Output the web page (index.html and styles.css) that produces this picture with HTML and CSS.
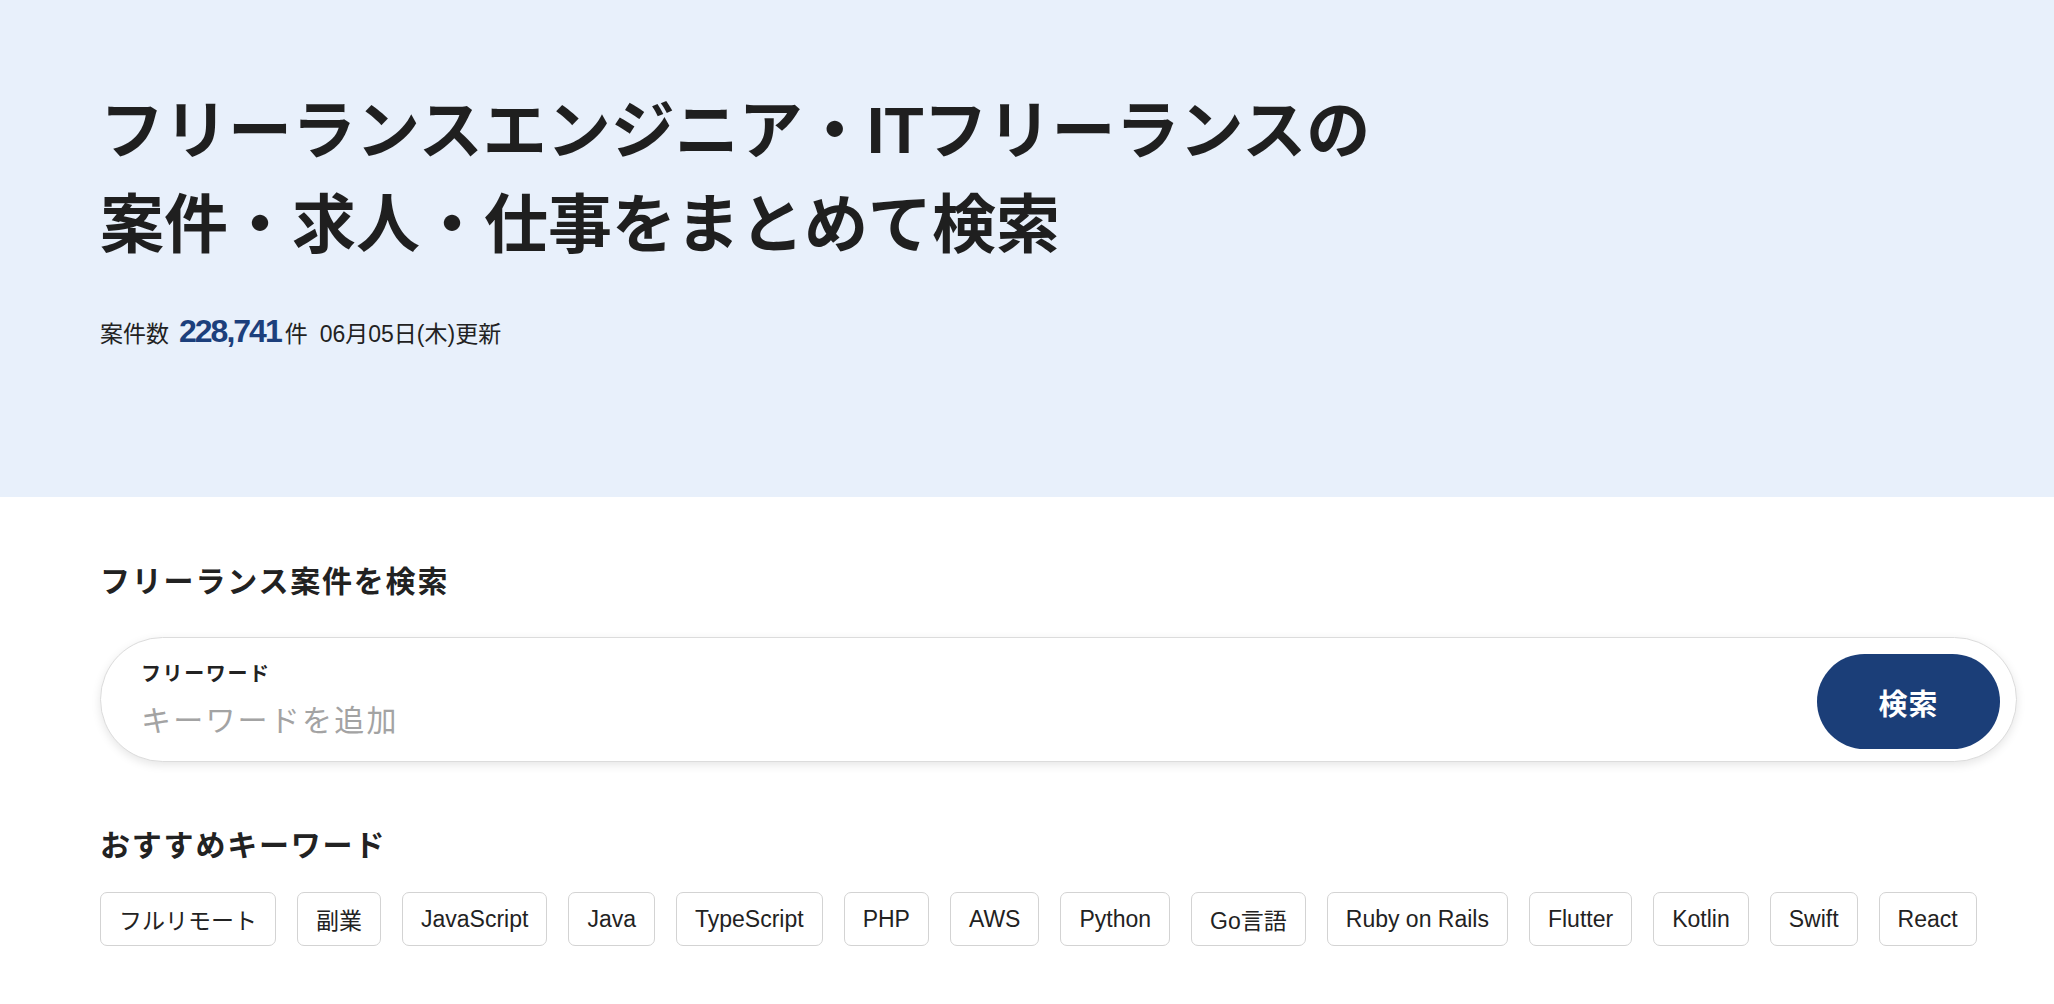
FILE: index.html
```html
<!DOCTYPE html>
<html lang="ja">
<head>
<meta charset="utf-8">
<title>フリーランス案件検索</title>
<link rel="stylesheet" href="styles.css">
</head>
<body>
<section class="hero">
  <h1 class="hero-title">フリーランスエンジニア・ITフリーランスの<br>案件・求人・仕事をまとめて検索</h1>
  <p class="hero-stats"><span class="stats-label">案件数</span><span class="stats-num">228,741</span><span class="stats-unit">件</span><span class="stats-date">06月05日(木)更新</span></p>
</section>
<main class="content">
  <h2 class="section-title">フリーランス案件を検索</h2>
  <form class="search-box">
    <div class="search-field">
      <label class="search-label" for="kw">フリーワード</label>
      <input id="kw" class="search-input" type="text" placeholder="キーワードを追加">
    </div>
    <button type="button" class="search-btn">検索</button>
  </form>
  <h2 class="section-title section-title--kw">おすすめキーワード</h2>
  <ul class="tags">
    <li class="tag">フルリモート</li>
    <li class="tag">副業</li>
    <li class="tag">JavaScript</li>
    <li class="tag">Java</li>
    <li class="tag">TypeScript</li>
    <li class="tag">PHP</li>
    <li class="tag">AWS</li>
    <li class="tag">Python</li>
    <li class="tag">Go言語</li>
    <li class="tag">Ruby on Rails</li>
    <li class="tag">Flutter</li>
    <li class="tag">Kotlin</li>
    <li class="tag">Swift</li>
    <li class="tag">React</li>
  </ul>
</main>
</body>
</html>
```
FILE: styles.css
```css
* { box-sizing: border-box; }
html, body { margin: 0; padding: 0; background: #fff; }
body {
  font-family: "Liberation Sans", "Noto Sans CJK JP", sans-serif;
  color: #222;
}
.hero {
  background: #e8f0fb;
  height: 497px;
  padding: 84px 37px 0 100px;
}
.hero-title {
  margin: 0;
  font-size: 64px;
  line-height: 94px;
  font-weight: 700;
  color: #1f1f1f;
  letter-spacing: 0;
}
.hero-stats {
  margin: 39px 0 0;
  height: 40px;
  display: flex;
  align-items: baseline;
  line-height: 40px;
  font-size: 23px;
  color: #222;
}
.stats-label { margin-right: 10px; }
.stats-num {
  font-size: 32px;
  font-weight: 700;
  color: #1c3f7c;
  letter-spacing: -2px;
  margin-right: 4px;
}
.stats-unit { margin-right: 12px; }

.content {
  padding: 0 37px 40px 100px;
}
.section-title {
  margin: 65px 0 0;
  font-size: 30px;
  line-height: 40px;
  font-weight: 700;
  letter-spacing: 1.8px;
  color: #222;
}
.section-title--kw { margin-top: 64px; }

.search-box {
  margin: 35px 0 0;
  height: 125px;
  border: 1px solid #dcdcdc;
  border-radius: 63px;
  box-shadow: 0 3px 10px rgba(0, 0, 0, 0.10);
  display: flex;
  align-items: center;
  justify-content: space-between;
  padding: 0 16px 0 40px;
  background: #fff;
}
.search-field {
  display: flex;
  flex-direction: column;
  gap: 13px;
  flex: 1;
  padding-top: 2px;
}
.search-label {
  font-size: 20px;
  line-height: 28px;
  font-weight: 700;
  letter-spacing: 1.6px;
  color: #222;
}
.search-input {
  border: none;
  outline: none;
  padding: 0;
  margin: 0;
  height: 40px;
  font-family: "Liberation Sans", "Noto Sans CJK JP", sans-serif;
  font-size: 30px;
  letter-spacing: 2.2px;
  color: #222;
  background: transparent;
}
.search-input::placeholder { color: #a3a3a3; }
.search-btn {
  width: 183px;
  height: 95px;
  border: none;
  border-radius: 48px;
  background: #1b3e78;
  color: #fff;
  font-family: "Liberation Sans", "Noto Sans CJK JP", sans-serif;
  font-size: 29px;
  font-weight: 700;
  letter-spacing: 1px;
  margin-top: 4px;
}

.tags {
  list-style: none;
  margin: 26px 0 0;
  padding: 0;
  display: flex;
  flex-wrap: wrap;
  gap: 21px;
}
.tag {
  height: 54px;
  padding: 0 18px;
  display: flex;
  align-items: center;
  border: 1.5px solid #d3d3d3;
  border-radius: 7px;
  font-size: 23px;
  color: #222;
}
```
